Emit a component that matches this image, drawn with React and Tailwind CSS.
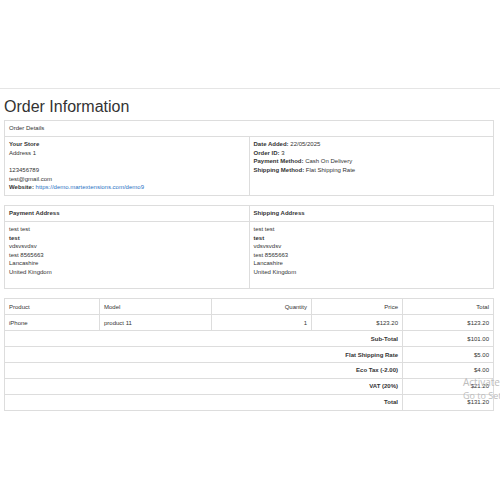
import React from 'react'

const cell = 'border border-[#ddd] px-[4px] py-[3.2px] align-top'

export default function App() {
  return (
    <div
      className="relative w-[500px] h-[500px] bg-white text-[#333] text-[6px] leading-[8.6px] overflow-hidden"
      style={{ fontFamily: '"Liberation Sans", Arial, sans-serif' }}
    >
      <div className="h-[89px] border-b border-[#e5e5e5]" />

      <div className="pl-[4px] pr-[6px]">
        <h1 className="text-[16px] leading-[20px] mt-[8px] mb-[3px] font-normal text-[#333]">
          Order Information
        </h1>

        {/* order details */}
        <table className="w-full border-collapse mb-[9px]">
          <thead>
            <tr>
              <td colSpan={2} className={cell}>
                Order Details
              </td>
            </tr>
          </thead>
          <tbody>
            <tr>
              <td className={cell + ' w-1/2'}>
                <b>Your Store</b>
                <br />
                Address 1
                <br />
                <br />
                123456789
                <br />
                test@gmail.com
                <br />
                <b>Website:</b>{' '}
                <a className="text-[#2a72c4]" href="#">
                  https://demo.martextensions.com/demo9
                </a>
              </td>
              <td className={cell + ' w-1/2'}>
                <b>Date Added:</b> 22/05/2025
                <br />
                <b>Order ID:</b> 3
                <br />
                <b>Payment Method:</b> Cash On Delivery
                <br />
                <b>Shipping Method:</b> Flat Shipping Rate
              </td>
            </tr>
          </tbody>
        </table>

        {/* addresses */}
        <table className="w-full border-collapse mb-[9px]">
          <thead>
            <tr>
              <td className={cell + ' w-1/2 font-bold'}>Payment Address</td>
              <td className={cell + ' w-1/2 font-bold'}>Shipping Address</td>
            </tr>
          </thead>
          <tbody>
            <tr>
              {[0, 1].map((i) => (
                <td key={i} className={cell}>
                  test test
                  <br />
                  <b>test</b>
                  <br />
                  vdsvsvdsv
                  <br />
                  test 8565663
                  <br />
                  Lancashire
                  <br />
                  United Kingdom
                  <br />
                  <br />
                </td>
              ))}
            </tr>
          </tbody>
        </table>

        {/* products */}
        <table className="w-full border-collapse">
          <thead>
            <tr>
              <td className={cell + ' w-[95px]'}>Product</td>
              <td className={cell + ' w-[112px]'}>Model</td>
              <td className={cell + ' w-[100px] text-right'}>Quantity</td>
              <td className={cell + ' w-[91px] text-right'}>Price</td>
              <td className={cell + ' text-right'}>Total</td>
            </tr>
          </thead>
          <tbody>
            <tr>
              <td className={cell}>iPhone</td>
              <td className={cell}>product 11</td>
              <td className={cell + ' text-right'}>1</td>
              <td className={cell + ' text-right'}>$123.20</td>
              <td className={cell + ' text-right'}>$123.20</td>
            </tr>
            {[
              ['Sub-Total', '$101.00'],
              ['Flat Shipping Rate', '$5.00'],
              ['Eco Tax (-2.00)', '$4.00'],
              ['VAT (20%)', '$21.20'],
              ['Total', '$131.20'],
            ].map(([label, value]) => (
              <tr key={label}>
                <td colSpan={4} className={cell + ' text-right font-bold'}>
                  {label}
                </td>
                <td className={cell + ' text-right'}>{value}</td>
              </tr>
            ))}
          </tbody>
        </table>
      </div>

      {/* windows watermark */}
      <div
        className="absolute left-[463px] top-[376px] text-[10px] leading-[13px] text-[#bdbdbd] whitespace-nowrap pointer-events-none"
        style={{ fontFamily: '"Open Sans", sans-serif' }}
      >
        <div>Activate</div>
        <div className="text-[9px]">Go to Settings</div>
      </div>
    </div>
  )
}
